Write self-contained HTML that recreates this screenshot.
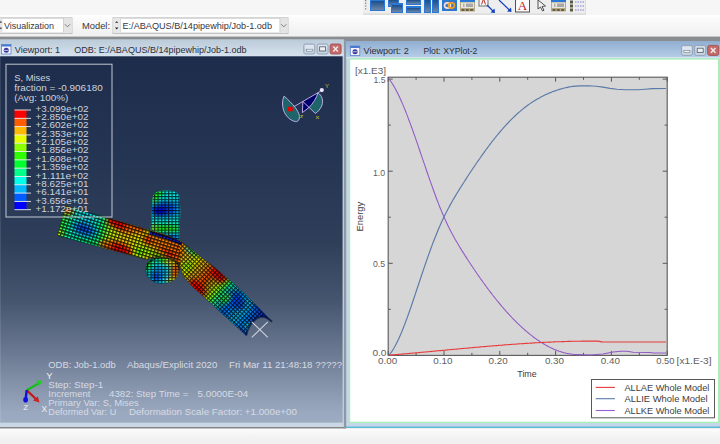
<!DOCTYPE html>
<html><head><meta charset="utf-8"><title>Abaqus Viewports</title>
<style>html,body{margin:0;padding:0;background:#f2f2f2;overflow:hidden} svg{display:block} text{font-family:"Liberation Sans", sans-serif}</style>
</head><body>
<svg width="720" height="444" viewBox="0 0 720 444">
<defs>
<linearGradient id="botbg" x1="0" y1="0" x2="0" y2="1"><stop offset="0" stop-color="#fcfcfc"/><stop offset="0.5" stop-color="#f4f4f4"/><stop offset="1" stop-color="#f0f0f0"/></linearGradient>
<linearGradient id="ctxbg" x1="0" y1="0" x2="0" y2="1"><stop offset="0" stop-color="#ffffff"/><stop offset="0.2" stop-color="#fafafa"/><stop offset="1" stop-color="#efefef"/></linearGradient>
<linearGradient id="vp1bg" x1="0" y1="0" x2="0" y2="1">
 <stop offset="0" stop-color="#1d2c4a"/>
 <stop offset="0.27" stop-color="#243553"/>
 <stop offset="0.51" stop-color="#2f3f5a"/>
 <stop offset="0.67" stop-color="#47566f"/>
 <stop offset="0.81" stop-color="#6b7a92"/>
 <stop offset="0.97" stop-color="#9aa8bf"/>
 <stop offset="1" stop-color="#9eacc2"/>
</linearGradient>
<linearGradient id="tb1" x1="0" y1="0" x2="0" y2="1"><stop offset="0" stop-color="#bccbd9"/><stop offset="1" stop-color="#d6e2ee"/></linearGradient>
<linearGradient id="tb2" x1="0" y1="0" x2="0" y2="1"><stop offset="0" stop-color="#90aed0"/><stop offset="1" stop-color="#b6cde8"/></linearGradient>
<linearGradient id="icoblue" x1="0" y1="0" x2="0" y2="1"><stop offset="0" stop-color="#1a4f8a"/><stop offset="1" stop-color="#6d86a8"/></linearGradient>
<filter id="blur3" x="-50%" y="-50%" width="200%" height="200%"><feGaussianBlur stdDeviation="3"/></filter>
<filter id="blur2" x="-50%" y="-50%" width="200%" height="200%"><feGaussianBlur stdDeviation="2"/></filter>
<filter id="blur5" x="-50%" y="-50%" width="200%" height="200%"><feGaussianBlur stdDeviation="5"/></filter>

<pattern id="mesh1" patternUnits="userSpaceOnUse" width="3.5" height="3.1" patternTransform="rotate(17)">
  <path d="M0 0.6 L3.5 0.6 M0.6 0 L0.6 3.1" stroke="#000" stroke-width="1.35" stroke-opacity="0.8"/>
</pattern>
<pattern id="mesh2" patternUnits="userSpaceOnUse" width="3.2" height="2.9" patternTransform="rotate(43)">
  <path d="M0 0.55 L3.2 0.55 M0.55 0 L0.55 2.9" stroke="#000" stroke-width="1.2" stroke-opacity="0.8"/>
</pattern>
<pattern id="mesh3" patternUnits="userSpaceOnUse" width="3.5" height="2.8">
  <path d="M0 0.6 L3.5 0.6 M0.6 0 L0.6 2.8" stroke="#000" stroke-width="1.15" stroke-opacity="0.8"/>
</pattern>
<filter id="soft" x="-5%" y="-5%" width="110%" height="110%"><feGaussianBlur stdDeviation="0.35"/></filter>
<clipPath id="cCyl"><path d="M150.2 246 L151.2 220 L152.6 200 C152.8 194 156 190.4 166 190.4 C175 190.4 179.6 193 179.9 198 L180.2 212 L179.6 246 Z"/></clipPath><clipPath id="cStub"><path d="M146 270 C146 260 153 255.5 162 255.5 C171 255.5 179.6 260 179.6 269.5 C179.6 278 171 283.6 162 283.6 C153 283.6 146 278 146 270 Z"/></clipPath><clipPath id="cPipeL"><path d="M65.3 205.6 L151.8 230.7 C164 234 172 236.5 180 241 C187 245.5 194 251 200 256.5 L214 267 C230 280 250 298 272 321.8 C267 316.5 261 315.5 256.5 318.5 C251.5 322 247.5 328 246.2 335.5 L192 286 L183.7 277 C182 272 181 268 179.5 265 C177 260 170 257.2 162 257.2 C155 257.2 150 258.5 146 259.3 L57.4 235.5 Z"/><rect x="0" y="0" width="0" height="0"/></clipPath><clipPath id="cPipe"><path d="M65.3 205.6 L151.8 230.7 C164 234 172 236.5 180 241 C187 245.5 194 251 200 256.5 L214 267 C230 280 250 298 272 321.8 C267 316.5 261 315.5 256.5 318.5 C251.5 322 247.5 328 246.2 335.5 L192 286 L183.7 277 C182 272 181 268 179.5 265 C177 260 170 257.2 162 257.2 C155 257.2 150 258.5 146 259.3 L57.4 235.5 Z"/></clipPath><linearGradient id="gL" gradientUnits="userSpaceOnUse" x1="58" y1="218" x2="182" y2="252">
 <stop offset="0" stop-color="#40ff00"/><stop offset="0.12" stop-color="#00ffc0"/><stop offset="0.22" stop-color="#00c8ff"/>
 <stop offset="0.34" stop-color="#00ff80"/><stop offset="0.42" stop-color="#c0ff00"/><stop offset="0.55" stop-color="#ffd000"/>
 <stop offset="0.68" stop-color="#d0ff00"/><stop offset="0.82" stop-color="#ff9000"/><stop offset="1" stop-color="#ff6000"/>
</linearGradient>
<linearGradient id="gR" gradientUnits="userSpaceOnUse" x1="182" y1="250" x2="268" y2="328">
 <stop offset="0" stop-color="#ff9000"/><stop offset="0.14" stop-color="#e8ff00"/><stop offset="0.32" stop-color="#ff5000"/>
 <stop offset="0.44" stop-color="#b0ff00"/><stop offset="0.52" stop-color="#00ffb0"/><stop offset="0.62" stop-color="#0070ff"/>
 <stop offset="0.74" stop-color="#00c8ff"/><stop offset="0.86" stop-color="#0050ff"/><stop offset="1" stop-color="#00a0ff"/>
</linearGradient></defs>
<rect x="0" y="0" width="720" height="444" fill="#f2f2f2"/>
<rect x="0" y="0" width="720" height="15" fill="#f6f6f6"/>
<rect x="0" y="15" width="720" height="22" fill="url(#ctxbg)"/>
<rect x="363" y="0" width="223" height="14.5" fill="#eeeeee"/>
<rect x="363" y="13.5" width="223" height="1.2" fill="#d6d6d6"/>
<rect x="585" y="0" width="1" height="14.5" fill="#dcdcdc"/>
<rect x="365" y="0" width="1.3" height="1.3" fill="#8a8a8a"/>
<rect x="365" y="2.6" width="1.3" height="1.3" fill="#8a8a8a"/>
<rect x="365" y="5.4" width="1.3" height="1.3" fill="#8a8a8a"/>
<rect x="365" y="8.2" width="1.3" height="1.3" fill="#8a8a8a"/>
<rect x="370" y="-1" width="15" height="12" fill="#2a78d6"/>
<rect x="371" y="1" width="13" height="9" fill="url(#icoblue)"/>
<rect x="388" y="-1" width="11" height="8" fill="#2a78d6"/><rect x="389" y="0" width="9" height="6" fill="url(#icoblue)"/>
<rect x="391" y="3" width="12" height="10" fill="#2a78d6"/><rect x="392" y="5" width="10" height="7" fill="url(#icoblue)"/>
<rect x="406" y="-1" width="15" height="6" fill="#2a78d6"/><rect x="407" y="0" width="13" height="4" fill="url(#icoblue)"/>
<rect x="406" y="6" width="15" height="7" fill="#2a78d6"/><rect x="407" y="8" width="13" height="4" fill="url(#icoblue)"/>
<rect x="424" y="-1" width="7" height="14" fill="#2a78d6"/><rect x="425" y="0" width="5" height="12" fill="url(#icoblue)"/>
<rect x="432" y="-1" width="7" height="14" fill="#2a78d6"/><rect x="433" y="0" width="5" height="12" fill="url(#icoblue)"/>
<rect x="442" y="-1" width="15" height="12" fill="#2a78d6"/><rect x="443" y="1" width="13" height="9" fill="#3f74b8"/>
<ellipse cx="447.5" cy="5.5" rx="3" ry="2.6" fill="none" stroke="#f0e0e0" stroke-width="1.6"/>
<ellipse cx="451.5" cy="5.5" rx="3" ry="2.6" fill="none" stroke="#f0a020" stroke-width="1.6"/>
<rect x="460" y="-1" width="15" height="12.5" fill="#b4aa88"/>
<rect x="460" y="-1" width="15" height="3" fill="#2a78d6"/>
<rect x="461" y="2.5" width="13" height="5.5" fill="#e8e6dc"/>
<rect x="463" y="3.5" width="1.5" height="3.5" fill="#b0b0b0"/><rect x="466" y="3.5" width="7" height="3.5" fill="#a8a8a8"/>
<rect x="461.5" y="9" width="3" height="2" fill="#6a6040"/>
<rect x="465.8" y="9" width="3" height="2" fill="#6a6040"/>
<rect x="470.1" y="9" width="3" height="2" fill="#6a6040"/>
<rect x="479" y="-2" width="9" height="8" fill="#f8f8f8" stroke="#707070" stroke-width="1"/>
<path d="M481.5 4.5 L483.5 -1 L485.5 4.5" fill="none" stroke="#c03030" stroke-width="1"/>
<path d="M487 5 L493.5 11.5" stroke="#1040c0" stroke-width="1.2"/><path d="M490.5 12.5 L495 13 L494.5 8.5 Z" fill="#1040c0"/>
<path d="M499 0 L510 10.5" stroke="#1040c0" stroke-width="1.2"/><path d="M507 11.5 L511.5 12 L511 7.5 Z" fill="#1040c0"/>
<rect x="515.5" y="-1" width="14" height="13" fill="#fafafa" stroke="#505050" stroke-width="1"/>
<text x="522.5" y="10.3" font-size="13" fill="#c01c1c" text-anchor="middle" style="font-family:'Liberation Serif',serif">A</text>
<path d="M538 0 L538 9 L540.5 7 L542.5 11 L544 10.3 L542 6.5 L545.5 6 Z" fill="#f4f4f4" stroke="#404040" stroke-width="0.9"/>
<rect x="551" y="-1" width="15" height="12.5" fill="#b4aa88"/>
<rect x="551" y="-1" width="15" height="3" fill="#2a78d6"/>
<rect x="552" y="2.5" width="13" height="5.5" fill="#e8e6dc"/>
<rect x="554" y="3.5" width="1.5" height="3.5" fill="#b0b0b0"/><rect x="557" y="3.5" width="7" height="3.5" fill="#a8a8a8"/>
<rect x="552.5" y="9" width="3" height="2" fill="#6a6040"/>
<rect x="556.8" y="9" width="3" height="2" fill="#6a6040"/>
<rect x="561.1" y="9" width="3" height="2" fill="#6a6040"/>
<rect x="570" y="0.5" width="3" height="3" fill="#5a5a40"/>
<path d="M575 2.0 L584 2.0" stroke="#8080d0" stroke-width="1" stroke-dasharray="1.5 1"/>
<rect x="570" y="4.5" width="3" height="3" fill="#5a5a40"/>
<path d="M575 6.0 L584 6.0" stroke="#8080d0" stroke-width="1" stroke-dasharray="1.5 1"/>
<rect x="570" y="8.5" width="3" height="3" fill="#5a5a40"/>
<path d="M575 10.0 L584 10.0" stroke="#8080d0" stroke-width="1" stroke-dasharray="1.5 1"/>
<rect x="-1" y="17.3" width="73.5" height="16.7" fill="#c4c4c4"/>
<rect x="0" y="18.6" width="71.5" height="14.0" fill="#ffffff"/>
<rect x="0" y="18.6" width="2.6" height="14.0" fill="#e6e6e6"/>
<rect x="0" y="21.3" width="1.6" height="1.6" fill="#555"/><rect x="0" y="27.5" width="1.6" height="1.6" fill="#555"/>
<rect x="63.5" y="18.2" width="8" height="14.2" fill="#e4e4e4"/><rect x="63" y="18.2" width="0.8" height="14.2" fill="#c8c8c8"/>
<path d="M64.9 24.2 L67.5 26.9 L70.1 24.2" fill="none" stroke="#6a6a6a" stroke-width="0.8"/>
<text x="4" y="28.8" font-size="9.5" fill="#34383f" text-anchor="start" textLength="50" lengthAdjust="spacingAndGlyphs" >Visualization</text>
<text x="82" y="28.8" font-size="9.5" fill="#34383f" text-anchor="start" textLength="28" lengthAdjust="spacingAndGlyphs" >Model:</text>
<rect x="112.5" y="17.3" width="176" height="16.7" fill="#c4c4c4"/>
<rect x="113.5" y="18.6" width="174" height="14.0" fill="#ffffff"/>
<rect x="113.5" y="18.2" width="6.5" height="14.2" fill="#e8e8e8"/><rect x="120" y="18.2" width="0.8" height="14.2" fill="#d0d0d0"/>
<path d="M115 23 L116.7 21 L118.4 23 Z" fill="#555"/><path d="M115 27.5 L116.7 29.5 L118.4 27.5 Z" fill="#222"/>
<rect x="280" y="18.2" width="7.5" height="14.2" fill="#e4e4e4"/><rect x="279.5" y="18.2" width="0.8" height="14.2" fill="#c8c8c8"/>
<path d="M281.2 24.2 L283.8 26.9 L286.4 24.2" fill="none" stroke="#6a6a6a" stroke-width="0.8"/>
<text x="122.5" y="28.8" font-size="9.5" fill="#34383f" text-anchor="start" textLength="149.5" lengthAdjust="spacingAndGlyphs" >E:/ABAQUS/B/14pipewhip/Job-1.odb</text>
<rect x="0" y="36.6" width="720" height="391.8" fill="#8a8c90"/>
<rect x="0" y="39.6" width="344" height="387.4" fill="#c4d2e0" rx="1"/>
<rect x="0" y="39.6" width="344" height="16.8" fill="url(#tb1)"/>
<rect x="0" y="56.3" width="342.6" height="366.5" fill="url(#vp1bg)"/>
<rect x="0" y="56.3" width="1" height="366.5" fill="#ffffff" fill-opacity="0.1"/>
<rect x="1.5" y="44.5" width="9.5" height="9.5" fill="#f4f6fc" stroke="#5a82c8" stroke-width="0.8"/>
<rect x="1.5" y="44.5" width="9.5" height="2" fill="#4a7ad0"/>
<ellipse cx="6.25" cy="50.3" rx="2.6" ry="2.5" fill="#3a3898"/>
<rect x="3.8" y="49.9" width="4.9" height="0.8" fill="#d8d8f8"/>
<text x="14.8" y="52.9" font-size="9" fill="#2c3038" text-anchor="start" textLength="45.3" lengthAdjust="spacingAndGlyphs" >Viewport: 1</text>
<text x="74.3" y="52.9" font-size="9" fill="#2c3038" text-anchor="start" textLength="172.3" lengthAdjust="spacingAndGlyphs" >ODB: E:/ABAQUS/B/14pipewhip/Job-1.odb</text>
<rect x="303.8" y="44" width="11" height="10" rx="1.8" fill="#c8d4e2" stroke="#8e9eb4" stroke-width="0.9"/>
<rect x="304.8" y="45" width="9" height="4" rx="1" fill="#dde6f0"/>
<rect x="317.1" y="44" width="11" height="10" rx="1.8" fill="#c8d4e2" stroke="#8e9eb4" stroke-width="0.9"/>
<rect x="318.1" y="45" width="9" height="4" rx="1" fill="#dde6f0"/>
<rect x="330.1" y="44" width="11" height="10" rx="1.8" fill="#c46a6a" stroke="#a05050" stroke-width="0.9"/>
<rect x="306.3" y="49.2" width="6" height="2" fill="#f4f4f4" stroke="#707c8c" stroke-width="0.6"/>
<rect x="319.6" y="46.8" width="6" height="4.2" fill="#eef0f4" stroke="#5a6878" stroke-width="0.9"/>
<path d="M333.3 46.6 L337.90000000000003 51.4 M337.90000000000003 46.6 L333.3 51.4" stroke="#f2e8e8" stroke-width="1.5"/>
<g filter="url(#soft)">
<g clip-path="url(#cCyl)"><rect x="140" y="185" width="50" height="65" fill="#00f0f0"/><g filter="url(#blur2)"><ellipse cx="154" cy="200" rx="4" ry="10" transform="rotate(0 154 200)" fill="#20ff00"/><ellipse cx="158" cy="193" rx="5" ry="3" transform="rotate(0 158 193)" fill="#20ff00"/><ellipse cx="165" cy="209" rx="16" ry="7" transform="rotate(0 165 209)" fill="#0050ff"/><ellipse cx="160" cy="211" rx="8" ry="5" transform="rotate(0 160 211)" fill="#0000e0"/><ellipse cx="178" cy="207" rx="3" ry="9" transform="rotate(0 178 207)" fill="#00a8ff"/><ellipse cx="165" cy="229" rx="16" ry="4" transform="rotate(0 165 229)" fill="#20ff00"/><ellipse cx="154" cy="228" rx="3" ry="4" transform="rotate(0 154 228)" fill="#a0ff00"/><ellipse cx="178" cy="228" rx="2" ry="5" transform="rotate(0 178 228)" fill="#00ff60"/><ellipse cx="166" cy="237" rx="15" ry="3" transform="rotate(0 166 237)" fill="#0050ff"/><ellipse cx="158" cy="237" rx="6" ry="2" transform="rotate(0 158 237)" fill="#0000e0"/></g><rect x="140" y="185" width="50" height="65" fill="url(#mesh3)"/></g>
<g clip-path="url(#cStub)"><rect x="140" y="250" width="45" height="40" fill="#00f0f0"/><g filter="url(#blur2)"><ellipse cx="148" cy="264" rx="4" ry="7" transform="rotate(0 148 264)" fill="#20ff00"/><ellipse cx="158" cy="274" rx="8" ry="8" transform="rotate(0 158 274)" fill="#00a8ff"/><ellipse cx="156" cy="277" rx="5" ry="5" transform="rotate(0 156 277)" fill="#0050ff"/><ellipse cx="175" cy="272" rx="5" ry="9" transform="rotate(0 175 272)" fill="#ff8000"/><ellipse cx="170" cy="261" rx="8" ry="4" transform="rotate(0 170 261)" fill="#ffe000"/><ellipse cx="162" cy="260" rx="5" ry="3" transform="rotate(0 162 260)" fill="#20ff00"/><ellipse cx="171" cy="281" rx="5" ry="3" transform="rotate(0 171 281)" fill="#ffe000"/><ellipse cx="178" cy="268" rx="2" ry="6" transform="rotate(0 178 268)" fill="#ff0000"/></g><rect x="140" y="250" width="45" height="40" fill="url(#mesh3)"/><path d="M146 270 C146 262 153 257.5 162 257.5 C171 257.5 179.6 262 179.6 269.5" fill="none" stroke="#000" stroke-opacity="0.55" stroke-width="2"/></g>
<g clip-path="url(#cPipe)"><rect x="50" y="195" width="132" height="145" fill="url(#gL)"/><rect x="180" y="195" width="100" height="145" fill="url(#gR)"/><g filter="url(#blur2)"><ellipse cx="68" cy="210" rx="6" ry="5" transform="rotate(17 68 210)" fill="#ff8000"/><ellipse cx="59" cy="233" rx="4" ry="3" transform="rotate(17 59 233)" fill="#ffe000"/><ellipse cx="85" cy="229" rx="13" ry="6" transform="rotate(17 85 229)" fill="#00a8ff"/><ellipse cx="84" cy="229" rx="9" ry="4" transform="rotate(17 84 229)" fill="#0050ff"/><ellipse cx="83" cy="229" rx="4" ry="2.2" transform="rotate(17 83 229)" fill="#0000e0"/><ellipse cx="88" cy="217" rx="14" ry="3" transform="rotate(17 88 217)" fill="#00f0f0"/><ellipse cx="86" cy="242" rx="14" ry="3" transform="rotate(17 86 242)" fill="#00ff60"/><ellipse cx="126" cy="225" rx="20" ry="6.5" transform="rotate(17 126 225)" fill="#ff0000"/><ellipse cx="116" cy="248" rx="17" ry="6" transform="rotate(17 116 248)" fill="#ff0000"/><ellipse cx="133" cy="229" rx="8" ry="3" transform="rotate(17 133 229)" fill="#ff8000"/><ellipse cx="106" cy="244" rx="6" ry="3" transform="rotate(17 106 244)" fill="#ff8000"/><ellipse cx="141" cy="252" rx="6" ry="3" transform="rotate(17 141 252)" fill="#20ff00"/><ellipse cx="140" cy="236" rx="6" ry="3" transform="rotate(17 140 236)" fill="#ffe000"/><ellipse cx="150" cy="240" rx="8" ry="5" transform="rotate(17 150 240)" fill="#ff3000"/><ellipse cx="163" cy="243" rx="13" ry="5" transform="rotate(17 163 243)" fill="#ff8000"/><ellipse cx="167" cy="252" rx="8" ry="3" transform="rotate(20 167 252)" fill="#ff0000"/><ellipse cx="148" cy="252" rx="7" ry="4" transform="rotate(17 148 252)" fill="#a0ff00"/><ellipse cx="158" cy="255" rx="6" ry="2" transform="rotate(17 158 255)" fill="#20ff00"/><ellipse cx="192" cy="251" rx="7" ry="3" transform="rotate(38 192 251)" fill="#20ff00"/><ellipse cx="188" cy="249" rx="4" ry="2" transform="rotate(38 188 249)" fill="#00f0f0"/><ellipse cx="187" cy="266" rx="5" ry="5" transform="rotate(43 187 266)" fill="#a0ff00"/><ellipse cx="194" cy="284" rx="5" ry="4" transform="rotate(43 194 284)" fill="#ff0000"/><ellipse cx="219" cy="275" rx="9" ry="6" transform="rotate(43 219 275)" fill="#ff0000"/><ellipse cx="198" cy="289" rx="9" ry="5" transform="rotate(43 198 289)" fill="#ff0000"/><ellipse cx="235" cy="300" rx="12" ry="6" transform="rotate(43 235 300)" fill="#0050ff"/><ellipse cx="246" cy="290" rx="10" ry="4" transform="rotate(43 246 290)" fill="#00f0f0"/><ellipse cx="226" cy="298" rx="4" ry="6" transform="rotate(43 226 298)" fill="#20ff00"/><ellipse cx="262" cy="311" rx="10" ry="5" transform="rotate(43 262 311)" fill="#0050ff"/><ellipse cx="265" cy="317" rx="7" ry="2.5" transform="rotate(43 265 317)" fill="#0000e0"/><ellipse cx="250" cy="328" rx="7" ry="4" transform="rotate(43 250 328)" fill="#00f0f0"/></g><path d="M150 232.5 C163 236 172 238.5 182 244" stroke="#0818b0" stroke-width="3" fill="none" filter="url(#soft)"/><rect x="50" y="195" width="130" height="145" fill="url(#mesh1)"/><rect x="180" y="195" width="100" height="145" fill="url(#mesh2)"/></g>
<path d="M272 321.8 C267 316.5 261 315.5 256.5 318.5 C251.5 322 247.5 328 246.2 335.5" fill="none" stroke="#000a40" stroke-width="2.2" stroke-opacity="0.5"/>
<path d="M65.3 205.6 L151.8 230.7 C164 234 172 236.5 180 241 C187 245.5 194 251 200 256.5 L214 267 C230 280 250 298 272 321.8 C267 316.5 261 315.5 256.5 318.5 C251.5 322 247.5 328 246.2 335.5 L192 286 L183.7 277 C182 272 181 268 179.5 265 C177 260 170 257.2 162 257.2 C155 257.2 150 258.5 146 259.3 L57.4 235.5 Z" fill="none" stroke="#0a1424" stroke-width="0.7" stroke-opacity="0.7"/>
<path d="M146 270 C146 260 153 255.5 162 255.5 C171 255.5 179.6 260 179.6 269.5 C179.6 278 171 283.6 162 283.6 C153 283.6 146 278 146 270" fill="none" stroke="#0a1424" stroke-width="0.6" stroke-opacity="0.6"/>
</g>
<path d="M251.8 321.8 L267.8 337.4 M267.8 321.8 L251.8 337.4" stroke="#cdd2da" stroke-width="1.05"/>
<rect x="6" y="64.2" width="106" height="152.8" fill="none" stroke="#c2c8d2" stroke-width="1"/>
<text x="14.2" y="81" font-size="9" fill="#cdd3de" text-anchor="start" textLength="36" lengthAdjust="spacingAndGlyphs" >S, Mises</text>
<text x="14.2" y="91.4" font-size="9" fill="#cdd3de" text-anchor="start" textLength="88.5" lengthAdjust="spacingAndGlyphs" >fraction = -0.906180</text>
<text x="14.2" y="101.3" font-size="9" fill="#cdd3de" text-anchor="start" textLength="54" lengthAdjust="spacingAndGlyphs" >(Avg: 100%)</text>
<rect x="14.5" y="110.00" width="12" height="8.36" fill="#ff0000"/>
<rect x="14.5" y="118.31" width="12" height="8.36" fill="#ff5d00"/>
<rect x="14.5" y="126.62" width="12" height="8.36" fill="#ffb900"/>
<rect x="14.5" y="134.93" width="12" height="8.36" fill="#e8ff00"/>
<rect x="14.5" y="143.23" width="12" height="8.36" fill="#8bff00"/>
<rect x="14.5" y="151.54" width="12" height="8.36" fill="#2eff00"/>
<rect x="14.5" y="159.85" width="12" height="8.36" fill="#00ff2e"/>
<rect x="14.5" y="168.16" width="12" height="8.36" fill="#00ff8b"/>
<rect x="14.5" y="176.47" width="12" height="8.36" fill="#00ffe8"/>
<rect x="14.5" y="184.77" width="12" height="8.36" fill="#00b9ff"/>
<rect x="14.5" y="193.08" width="12" height="8.36" fill="#005dff"/>
<rect x="14.5" y="201.39" width="12" height="8.36" fill="#0000ff"/>
<rect x="14.5" y="109.55" width="16.5" height="0.9" fill="#f0f0f0"/>
<text x="35.5" y="111.60" font-size="9.4" fill="#cdd3de" text-anchor="start" textLength="53" lengthAdjust="spacingAndGlyphs" >+3.099e+02</text>
<rect x="14.5" y="117.86" width="16.5" height="0.9" fill="#f0f0f0"/>
<text x="35.5" y="119.97" font-size="9.4" fill="#cdd3de" text-anchor="start" textLength="53" lengthAdjust="spacingAndGlyphs" >+2.850e+02</text>
<rect x="14.5" y="126.17" width="16.5" height="0.9" fill="#f0f0f0"/>
<text x="35.5" y="128.34" font-size="9.4" fill="#cdd3de" text-anchor="start" textLength="53" lengthAdjust="spacingAndGlyphs" >+2.602e+02</text>
<rect x="14.5" y="134.48" width="16.5" height="0.9" fill="#f0f0f0"/>
<text x="35.5" y="136.71" font-size="9.4" fill="#cdd3de" text-anchor="start" textLength="53" lengthAdjust="spacingAndGlyphs" >+2.353e+02</text>
<rect x="14.5" y="142.78" width="16.5" height="0.9" fill="#f0f0f0"/>
<text x="35.5" y="145.08" font-size="9.4" fill="#cdd3de" text-anchor="start" textLength="53" lengthAdjust="spacingAndGlyphs" >+2.105e+02</text>
<rect x="14.5" y="151.09" width="16.5" height="0.9" fill="#f0f0f0"/>
<text x="35.5" y="153.45" font-size="9.4" fill="#cdd3de" text-anchor="start" textLength="53" lengthAdjust="spacingAndGlyphs" >+1.856e+02</text>
<rect x="14.5" y="159.40" width="16.5" height="0.9" fill="#f0f0f0"/>
<text x="35.5" y="161.82" font-size="9.4" fill="#cdd3de" text-anchor="start" textLength="53" lengthAdjust="spacingAndGlyphs" >+1.608e+02</text>
<rect x="14.5" y="167.71" width="16.5" height="0.9" fill="#f0f0f0"/>
<text x="35.5" y="170.19" font-size="9.4" fill="#cdd3de" text-anchor="start" textLength="53" lengthAdjust="spacingAndGlyphs" >+1.359e+02</text>
<rect x="14.5" y="176.02" width="16.5" height="0.9" fill="#f0f0f0"/>
<text x="35.5" y="178.56" font-size="9.4" fill="#cdd3de" text-anchor="start" textLength="53" lengthAdjust="spacingAndGlyphs" >+1.111e+02</text>
<rect x="14.5" y="184.32" width="16.5" height="0.9" fill="#f0f0f0"/>
<text x="35.5" y="186.93" font-size="9.4" fill="#cdd3de" text-anchor="start" textLength="53" lengthAdjust="spacingAndGlyphs" >+8.625e+01</text>
<rect x="14.5" y="192.63" width="16.5" height="0.9" fill="#f0f0f0"/>
<text x="35.5" y="195.30" font-size="9.4" fill="#cdd3de" text-anchor="start" textLength="53" lengthAdjust="spacingAndGlyphs" >+6.141e+01</text>
<rect x="14.5" y="200.94" width="16.5" height="0.9" fill="#f0f0f0"/>
<text x="35.5" y="203.67" font-size="9.4" fill="#cdd3de" text-anchor="start" textLength="53" lengthAdjust="spacingAndGlyphs" >+3.656e+01</text>
<rect x="14.5" y="209.25" width="16.5" height="0.9" fill="#f0f0f0"/>
<text x="35.5" y="212.04" font-size="9.4" fill="#cdd3de" text-anchor="start" textLength="53" lengthAdjust="spacingAndGlyphs" >+1.172e+01</text>
<text x="48.3" y="368.2" font-size="9" fill="#d6dbe4" text-anchor="start" textLength="67.4" lengthAdjust="spacingAndGlyphs" >ODB: Job-1.odb</text>
<text x="127" y="368.2" font-size="9" fill="#d6dbe4" text-anchor="start" textLength="90.3" lengthAdjust="spacingAndGlyphs" >Abaqus/Explicit 2020</text>
<text x="229" y="368.2" font-size="9" fill="#d6dbe4" text-anchor="start" textLength="113" lengthAdjust="spacingAndGlyphs" >Fri Mar 11 21:48:18 ?????</text>
<text x="48.3" y="388.3" font-size="9" fill="#d6dbe4" text-anchor="start" textLength="54.9" lengthAdjust="spacingAndGlyphs" >Step: Step-1</text>
<text x="48.3" y="397.2" font-size="9" fill="#d6dbe4" text-anchor="start" textLength="42" lengthAdjust="spacingAndGlyphs" >Increment</text>
<text x="109" y="397.2" font-size="9" fill="#d6dbe4" text-anchor="start" textLength="79.4" lengthAdjust="spacingAndGlyphs" >4382: Step Time =</text>
<text x="197.5" y="397.2" font-size="9" fill="#d6dbe4" text-anchor="start" textLength="50.8" lengthAdjust="spacingAndGlyphs" >5.0000E-04</text>
<text x="48.3" y="406.3" font-size="9" fill="#d6dbe4" text-anchor="start" textLength="90.5" lengthAdjust="spacingAndGlyphs" >Primary Var: S, Mises</text>
<text x="48.3" y="415.4" font-size="9" fill="#d6dbe4" text-anchor="start" textLength="68" lengthAdjust="spacingAndGlyphs" >Deformed Var: U</text>
<text x="128.9" y="415.4" font-size="9" fill="#d6dbe4" text-anchor="start" textLength="168" lengthAdjust="spacingAndGlyphs" >Deformation Scale Factor: +1.000e+00</text>
<path d="M26.7 390.2 L40 382.6" stroke="#10c010" stroke-width="2.2"/><path d="M36.5 379.8 L42.5 381.2 L39 386 Z" fill="#20d020"/>
<path d="M26.7 390.2 L36.5 399.5" stroke="#c01818" stroke-width="2.2"/><path d="M33 400.5 L39.5 402.5 L37.8 396.5 Z" fill="#d02020"/>
<path d="M26.7 390.2 L25.8 398" stroke="#1010d0" stroke-width="2.4"/><ellipse cx="25.6" cy="399.8" rx="2.4" ry="2.8" fill="#1010e0"/>
<text x="46.2" y="379.3" font-size="9" fill="#f0f0f0" text-anchor="start" textLength="6.3" lengthAdjust="spacingAndGlyphs" >Y</text>
<text x="23.3" y="410" font-size="8" fill="#f0f0f0" text-anchor="start" textLength="5" lengthAdjust="spacingAndGlyphs" >Z</text>
<text x="41.4" y="412" font-size="9" fill="#f0f0f0" text-anchor="start" textLength="5.6" lengthAdjust="spacingAndGlyphs" >X</text>
<path d="M284.1 96.1 C282 100 282.2 106 283.5 110 C285.5 116 290 120.5 295.5 121.6 C298.5 122 299.8 119 299.3 115.4 C298 110 293 104 284.1 96.1 Z" fill="#1d6568" stroke="#c4b0f0" stroke-width="0.95"/>
<rect x="287.7" y="106.8" width="5" height="4.5" fill="#ee0000"/>
<path d="M317.9 92.9 C322 95 323.5 101 322 105 C320.5 109 318 112 315.3 113.4 L309 107.5 C313 103.5 316.5 98 317.9 92.9 Z" fill="#1d6568"/>
<path d="M302.9 101.5 L317.9 92.9 C316.5 98 313 103.5 309 107.5 Z" fill="#00006a"/>
<path d="M302.9 101.5 L309 107.5 L302.4 112.6 Z" fill="#00006a"/>
<path d="M293.7 106.8 L320.5 91.2 M302.9 101.5 L302.4 112.6 M302.9 101.5 L315.3 113.4 M302.4 112.6 L309 107.5 M317.9 92.9 C316.5 98 313 103.5 309 107.5 M317.9 92.9 C322 95 323.5 101 322 105 C320.5 109 318 112 315.3 113.4" stroke="#c4b0f0" stroke-width="0.95" fill="none"/>
<circle cx="321.8" cy="90.1" r="2.1" fill="#ece4fa"/>
<text x="325" y="88.2" font-size="6" fill="#c8c030" text-anchor="start" textLength="4" lengthAdjust="spacingAndGlyphs" >Y</text>
<text x="299.8" y="118" font-size="6" fill="#c8c030" text-anchor="start" textLength="3.6" lengthAdjust="spacingAndGlyphs" >z</text>
<text x="315.6" y="118.5" font-size="6" fill="#c8c030" text-anchor="start" textLength="3.8" lengthAdjust="spacingAndGlyphs" >x</text>
<rect x="346.1" y="41" width="373.9" height="386.5" fill="#c6d6ea" rx="2"/>
<rect x="346.1" y="41" width="373.9" height="16.5" fill="url(#tb2)"/>
<rect x="346.1" y="57" width="373.9" height="1.6" fill="#d6e2f0"/>
<rect x="346.1" y="426.5" width="373.9" height="1.5" fill="#5cbcd6"/>
<rect x="349.5" y="59" width="369.2" height="363.4" fill="#ffffff" stroke="#a8f0b8" stroke-width="1.4"/>
<rect x="350.3" y="46" width="9.5" height="9.5" fill="#f4f6fc" stroke="#5a82c8" stroke-width="0.8"/>
<rect x="350.3" y="46" width="9.5" height="2" fill="#4a7ad0"/>
<ellipse cx="355.05" cy="51.8" rx="2.6" ry="2.5" fill="#3a3898"/>
<rect x="352.6" y="51.4" width="4.9" height="0.8" fill="#d8d8f8"/>
<text x="363.5" y="53.9" font-size="9" fill="#2c3038" text-anchor="start" textLength="45.2" lengthAdjust="spacingAndGlyphs" >Viewport: 2</text>
<text x="423.4" y="53.9" font-size="9" fill="#2c3038" text-anchor="start" textLength="54" lengthAdjust="spacingAndGlyphs" >Plot: XYPlot-2</text>
<rect x="681.4" y="45.4" width="11" height="10" rx="1.8" fill="#c8d4e2" stroke="#8e9eb4" stroke-width="0.9"/>
<rect x="682.4" y="46.4" width="9" height="4" rx="1" fill="#dde6f0"/>
<rect x="694.6999999999999" y="45.4" width="11" height="10" rx="1.8" fill="#c8d4e2" stroke="#8e9eb4" stroke-width="0.9"/>
<rect x="695.6999999999999" y="46.4" width="9" height="4" rx="1" fill="#dde6f0"/>
<rect x="707.6999999999999" y="45.4" width="11" height="10" rx="1.8" fill="#c46a6a" stroke="#a05050" stroke-width="0.9"/>
<rect x="683.9" y="50.6" width="6" height="2" fill="#f4f4f4" stroke="#707c8c" stroke-width="0.6"/>
<rect x="697.1999999999999" y="48.199999999999996" width="6" height="4.2" fill="#eef0f4" stroke="#5a6878" stroke-width="0.9"/>
<path d="M710.9 48.0 L715.4999999999999 52.8 M715.4999999999999 48.0 L710.9 52.8" stroke="#f2e8e8" stroke-width="1.5"/>
<rect x="388.2" y="77.2" width="279.00000000000006" height="278.2" fill="#d6d6d6" stroke="#5e5e5e" stroke-width="1.15"/>
<path d="M388.2 355.4 L388.2 350.9" stroke="#585858" stroke-width="1"/>
<path d="M388.2 77.2 L388.2 81.7" stroke="#585858" stroke-width="1"/>
<path d="M416.1 355.4 L416.1 352.79999999999995" stroke="#585858" stroke-width="1"/>
<path d="M416.1 77.2 L416.1 79.8" stroke="#585858" stroke-width="1"/>
<path d="M444.0 355.4 L444.0 350.9" stroke="#585858" stroke-width="1"/>
<path d="M444.0 77.2 L444.0 81.7" stroke="#585858" stroke-width="1"/>
<path d="M471.9 355.4 L471.9 352.79999999999995" stroke="#585858" stroke-width="1"/>
<path d="M471.9 77.2 L471.9 79.8" stroke="#585858" stroke-width="1"/>
<path d="M499.8 355.4 L499.8 350.9" stroke="#585858" stroke-width="1"/>
<path d="M499.8 77.2 L499.8 81.7" stroke="#585858" stroke-width="1"/>
<path d="M527.7 355.4 L527.7 352.79999999999995" stroke="#585858" stroke-width="1"/>
<path d="M527.7 77.2 L527.7 79.8" stroke="#585858" stroke-width="1"/>
<path d="M555.6 355.4 L555.6 350.9" stroke="#585858" stroke-width="1"/>
<path d="M555.6 77.2 L555.6 81.7" stroke="#585858" stroke-width="1"/>
<path d="M583.5 355.4 L583.5 352.79999999999995" stroke="#585858" stroke-width="1"/>
<path d="M583.5 77.2 L583.5 79.8" stroke="#585858" stroke-width="1"/>
<path d="M611.4 355.4 L611.4 350.9" stroke="#585858" stroke-width="1"/>
<path d="M611.4 77.2 L611.4 81.7" stroke="#585858" stroke-width="1"/>
<path d="M639.3 355.4 L639.3 352.79999999999995" stroke="#585858" stroke-width="1"/>
<path d="M639.3 77.2 L639.3 79.8" stroke="#585858" stroke-width="1"/>
<path d="M667.2 355.4 L667.2 350.9" stroke="#585858" stroke-width="1"/>
<path d="M667.2 77.2 L667.2 81.7" stroke="#585858" stroke-width="1"/>
<path d="M388.2 309.3 L390.8 309.3" stroke="#585858" stroke-width="1"/>
<path d="M667.2 309.3 L664.6 309.3" stroke="#585858" stroke-width="1"/>
<path d="M388.2 263.3 L392.7 263.3" stroke="#585858" stroke-width="1"/>
<path d="M667.2 263.3 L662.7 263.3" stroke="#585858" stroke-width="1"/>
<path d="M388.2 217.2 L390.8 217.2" stroke="#585858" stroke-width="1"/>
<path d="M667.2 217.2 L664.6 217.2" stroke="#585858" stroke-width="1"/>
<path d="M388.2 171.2 L392.7 171.2" stroke="#585858" stroke-width="1"/>
<path d="M667.2 171.2 L662.7 171.2" stroke="#585858" stroke-width="1"/>
<path d="M388.2 125.1 L390.8 125.1" stroke="#585858" stroke-width="1"/>
<path d="M667.2 125.1 L664.6 125.1" stroke="#585858" stroke-width="1"/>
<path d="M388.2 79.1 L392.7 79.1" stroke="#585858" stroke-width="1"/>
<path d="M667.2 79.1 L662.7 79.1" stroke="#585858" stroke-width="1"/>
<path d="M388.4 355.8 L389.4 354.7 L390.4 353.5 L391.4 352.1 L392.4 350.6 L393.4 349.0 L394.4 347.3 L395.4 345.5 L396.4 343.6 L397.4 341.6 L398.4 339.5 L399.4 337.3 L400.4 335.0 L401.4 332.6 L402.4 330.2 L403.4 327.7 L404.4 325.1 L405.4 322.5 L406.4 319.8 L407.4 317.1 L408.4 314.3 L409.4 311.5 L410.4 308.6 L411.4 305.7 L412.4 302.8 L413.4 299.8 L414.4 296.8 L415.4 293.9 L416.4 290.8 L417.4 287.8 L418.4 284.8 L419.4 281.8 L420.4 278.8 L421.4 275.8 L422.4 272.8 L423.4 269.9 L424.4 266.9 L425.4 264.0 L426.4 261.1 L427.4 258.2 L428.4 255.4 L429.4 252.6 L430.4 249.8 L431.4 247.1 L432.4 244.4 L433.4 241.8 L434.4 239.2 L435.4 236.7 L436.4 234.2 L437.4 231.7 L438.4 229.3 L439.4 227.0 L440.4 224.7 L441.4 222.5 L442.4 220.3 L443.4 218.2 L444.4 216.1 L445.4 214.1 L446.4 212.1 L447.4 210.2 L448.4 208.3 L449.4 206.4 L450.4 204.6 L451.4 202.8 L452.4 201.0 L453.4 199.3 L454.4 197.6 L455.4 195.9 L456.4 194.2 L457.4 192.6 L458.4 191.0 L459.4 189.4 L460.4 187.8 L461.4 186.2 L462.4 184.6 L463.4 183.0 L464.4 181.5 L465.4 179.9 L466.4 178.4 L467.4 176.8 L468.4 175.3 L469.4 173.8 L470.4 172.2 L471.4 170.7 L472.4 169.2 L473.4 167.7 L474.4 166.3 L475.4 164.8 L476.4 163.3 L477.4 161.8 L478.4 160.4 L479.4 159.0 L480.4 157.5 L481.4 156.1 L482.4 154.7 L483.4 153.3 L484.4 151.9 L485.4 150.5 L486.4 149.2 L487.4 147.8 L488.4 146.5 L489.4 145.2 L490.4 143.8 L491.4 142.5 L492.4 141.2 L493.4 140.0 L494.4 138.7 L495.4 137.5 L496.4 136.2 L497.4 135.0 L498.4 133.8 L499.4 132.6 L500.4 131.4 L501.4 130.2 L502.4 129.1 L503.4 127.9 L504.4 126.8 L505.4 125.7 L506.4 124.6 L507.4 123.5 L508.4 122.5 L509.4 121.4 L510.4 120.4 L511.4 119.4 L512.4 118.4 L513.4 117.4 L514.4 116.5 L515.4 115.5 L516.4 114.6 L517.4 113.7 L518.4 112.8 L519.4 111.9 L520.4 111.1 L521.4 110.2 L522.4 109.4 L523.4 108.6 L524.4 107.8 L525.4 107.0 L526.4 106.3 L527.4 105.5 L528.4 104.8 L529.4 104.1 L530.4 103.4 L531.4 102.7 L532.4 102.1 L533.4 101.4 L534.4 100.8 L535.4 100.2 L536.4 99.6 L537.4 99.0 L538.4 98.4 L539.4 97.9 L540.4 97.3 L541.4 96.8 L542.4 96.3 L543.4 95.8 L544.4 95.3 L545.4 94.8 L546.4 94.3 L547.4 93.9 L548.4 93.4 L549.4 93.0 L550.4 92.6 L551.4 92.2 L552.4 91.8 L553.4 91.4 L554.4 91.1 L555.4 90.7 L556.4 90.4 L557.4 90.0 L558.4 89.7 L559.4 89.4 L560.4 89.1 L561.4 88.8 L562.4 88.6 L563.4 88.3 L564.4 88.0 L565.4 87.8 L566.4 87.6 L567.4 87.4 L568.4 87.1 L569.4 86.9 L570.4 86.7 L571.4 86.6 L572.4 86.4 L580.0 85.9 L588.5 85.8 L596.0 86.2 L603.0 87.1 L610.0 88.4 L617.0 89.3 L625.0 89.7 L638.0 89.8 L645.0 89.2 L652.0 88.6 L666.0 88.5" fill="none" stroke="#5a7aa8" stroke-width="1.15" stroke-linejoin="round"/>
<path d="M388.4 78.2 L389.4 79.5 L390.4 80.8 L391.4 82.3 L392.4 83.8 L393.4 85.4 L394.4 87.1 L395.4 88.9 L396.4 90.8 L397.4 92.7 L398.4 94.8 L399.4 96.9 L400.4 99.0 L401.4 101.3 L402.4 103.6 L403.4 105.9 L404.4 108.4 L405.4 110.8 L406.4 113.4 L407.4 115.9 L408.4 118.6 L409.4 121.2 L410.4 123.9 L411.4 126.7 L412.4 129.4 L413.4 132.2 L414.4 135.1 L415.4 137.9 L416.4 140.8 L417.4 143.7 L418.4 146.6 L419.4 149.5 L420.4 152.5 L421.4 155.4 L422.4 158.3 L423.4 161.3 L424.4 164.2 L425.4 167.1 L426.4 170.0 L427.4 173.0 L428.4 175.9 L429.4 178.7 L430.4 181.6 L431.4 184.4 L432.4 187.2 L433.4 190.0 L434.4 192.8 L435.4 195.5 L436.4 198.2 L437.4 200.8 L438.4 203.4 L439.4 206.0 L440.4 208.5 L441.4 210.9 L442.4 213.3 L443.4 215.6 L444.4 217.9 L445.4 220.1 L446.4 222.3 L447.4 224.4 L448.4 226.5 L449.4 228.5 L450.4 230.5 L451.4 232.4 L452.4 234.3 L453.4 236.1 L454.4 237.9 L455.4 239.7 L456.4 241.4 L457.4 243.1 L458.4 244.8 L459.4 246.5 L460.4 248.1 L461.4 249.7 L462.4 251.4 L463.4 252.9 L464.4 254.5 L465.4 256.1 L466.4 257.6 L467.4 259.2 L468.4 260.7 L469.4 262.3 L470.4 263.8 L471.4 265.3 L472.4 266.8 L473.4 268.3 L474.4 269.8 L475.4 271.2 L476.4 272.7 L477.4 274.2 L478.4 275.6 L479.4 277.0 L480.4 278.5 L481.4 279.9 L482.4 281.3 L483.4 282.7 L484.4 284.0 L485.4 285.4 L486.4 286.8 L487.4 288.1 L488.4 289.5 L489.4 290.8 L490.4 292.1 L491.4 293.4 L492.4 294.7 L493.4 296.0 L494.4 297.2 L495.4 298.5 L496.4 299.8 L497.4 301.0 L498.4 302.2 L499.4 303.4 L500.4 304.6 L501.4 305.8 L502.4 307.0 L503.4 308.1 L504.4 309.3 L505.4 310.4 L506.4 311.6 L507.4 312.7 L508.4 313.8 L509.4 314.9 L510.4 315.9 L511.4 317.0 L512.4 318.1 L513.4 319.1 L514.4 320.1 L515.4 321.1 L516.4 322.1 L517.4 323.1 L518.4 324.1 L519.4 325.0 L520.4 326.0 L521.4 326.9 L522.4 327.8 L523.4 328.7 L524.4 329.6 L525.4 330.5 L526.4 331.4 L527.4 332.2 L528.4 333.0 L529.4 333.8 L530.4 334.6 L531.4 335.4 L532.4 336.2 L533.4 337.0 L534.4 337.7 L535.4 338.4 L536.4 339.2 L537.4 339.9 L538.4 340.5 L539.4 341.2 L540.4 341.9 L541.4 342.5 L542.4 343.1 L543.4 343.7 L544.4 344.3 L545.4 344.9 L546.4 345.5 L547.4 346.0 L548.4 346.5 L549.4 347.1 L550.4 347.6 L551.4 348.0 L552.4 348.5 L553.4 349.0 L554.4 349.4 L555.4 349.8 L556.4 350.2 L557.4 350.6 L558.4 350.9 L559.4 351.3 L560.4 351.6 L561.4 351.9 L562.4 352.2 L563.4 352.5 L564.4 352.8 L565.4 353.0 L566.4 353.3 L567.4 353.5 L568.4 353.7 L569.4 353.8 L570.4 354.0 L571.4 354.1 L572.4 354.3 L573.4 354.4 L574.4 354.5 L575.4 354.5 L576.4 354.6 L577.4 354.6 L590.0 355.0 L603.0 353.9 L613.0 352.0 L621.0 351.2 L627.0 351.3 L633.0 352.2 L650.0 352.5 L653.0 353.0 L666.0 353.0" fill="none" stroke="#9058c4" stroke-width="1.05" stroke-linejoin="round"/>
<path d="M388.7 355.2 L389.7 355.1 L390.7 355.0 L391.7 355.0 L392.7 354.9 L393.7 354.8 L394.7 354.7 L395.7 354.6 L396.7 354.5 L397.7 354.5 L398.7 354.4 L399.7 354.3 L400.7 354.2 L401.7 354.1 L402.7 354.0 L403.7 353.9 L404.7 353.8 L405.7 353.8 L406.7 353.7 L407.7 353.6 L408.7 353.5 L409.7 353.4 L410.7 353.3 L411.7 353.2 L412.7 353.1 L413.7 353.0 L414.7 353.0 L415.7 352.9 L416.7 352.8 L417.7 352.7 L418.7 352.6 L419.7 352.5 L420.7 352.4 L421.7 352.3 L422.7 352.2 L423.7 352.1 L424.7 352.0 L425.7 352.0 L426.7 351.9 L427.7 351.8 L428.7 351.7 L429.7 351.6 L430.7 351.5 L431.7 351.4 L432.7 351.3 L433.7 351.2 L434.7 351.1 L435.7 351.0 L436.7 350.9 L437.7 350.8 L438.7 350.7 L439.7 350.6 L440.7 350.6 L441.7 350.5 L442.7 350.4 L443.7 350.3 L444.7 350.2 L445.7 350.1 L446.7 350.0 L447.7 349.9 L448.7 349.8 L449.7 349.7 L450.7 349.6 L451.7 349.5 L452.7 349.4 L453.7 349.3 L454.7 349.3 L455.7 349.2 L456.7 349.1 L457.7 349.0 L458.7 348.9 L459.7 348.8 L460.7 348.7 L461.7 348.6 L462.7 348.5 L463.7 348.4 L464.7 348.3 L465.7 348.2 L466.7 348.2 L467.7 348.1 L468.7 348.0 L469.7 347.9 L470.7 347.8 L471.7 347.7 L472.7 347.6 L473.7 347.5 L474.7 347.4 L475.7 347.3 L476.7 347.3 L477.7 347.2 L478.7 347.1 L479.7 347.0 L480.7 346.9 L481.7 346.8 L482.7 346.7 L483.7 346.6 L484.7 346.6 L485.7 346.5 L486.7 346.4 L487.7 346.3 L488.7 346.2 L489.7 346.1 L490.7 346.0 L491.7 346.0 L492.7 345.9 L493.7 345.8 L494.7 345.7 L495.7 345.6 L496.7 345.6 L497.7 345.5 L498.7 345.4 L499.7 345.3 L500.7 345.2 L501.7 345.2 L502.7 345.1 L503.7 345.0 L504.7 344.9 L505.7 344.8 L506.7 344.8 L507.7 344.7 L508.7 344.6 L509.7 344.5 L510.7 344.5 L511.7 344.4 L512.7 344.3 L513.7 344.3 L514.7 344.2 L515.7 344.1 L516.7 344.0 L517.7 344.0 L518.7 343.9 L519.7 343.8 L520.7 343.8 L521.7 343.7 L522.7 343.6 L523.7 343.6 L524.7 343.5 L525.7 343.4 L526.7 343.4 L527.7 343.3 L528.7 343.2 L529.7 343.2 L530.7 343.1 L531.7 343.1 L532.7 343.0 L533.7 342.9 L534.7 342.9 L535.7 342.8 L536.7 342.8 L537.7 342.7 L538.7 342.7 L539.7 342.6 L540.7 342.5 L541.7 342.5 L542.7 342.4 L543.7 342.4 L544.7 342.3 L545.7 342.3 L546.7 342.2 L547.7 342.2 L548.7 342.1 L549.7 342.1 L550.7 342.1 L551.7 342.0 L552.7 342.0 L553.7 341.9 L554.7 341.9 L555.7 341.8 L556.7 341.8 L557.7 341.8 L558.7 341.7 L559.7 341.7 L560.7 341.7 L561.7 341.6 L562.7 341.6 L563.7 341.6 L564.7 341.5 L565.7 341.5 L566.7 341.5 L567.7 341.4 L568.7 341.4 L569.7 341.4 L570.7 341.4 L571.7 341.3 L572.7 341.3 L573.7 341.3 L574.7 341.3 L575.7 341.2 L576.7 341.2 L577.7 341.2 L578.7 341.2 L579.7 341.2 L580.7 341.2 L581.7 341.1 L582.7 341.1 L583.7 341.1 L584.7 341.1 L585.7 341.1 L586.7 341.1 L587.7 341.1 L588.7 341.1 L589.7 341.1 L590.7 341.1 L591.7 341.1 L592.7 341.1 L593.7 341.1 L594.7 341.1 L595.7 341.1 L596.7 341.1 L597.7 341.1 L602.0 341.9 L666.0 342.0" fill="none" stroke="#e83a3a" stroke-width="1.1" stroke-linejoin="round"/>
<text x="354.9" y="73.9" font-size="9.5" fill="#606060" text-anchor="start" textLength="31.1" lengthAdjust="spacingAndGlyphs" >[x1.E3]</text>
<text x="373.4" y="82.8" font-size="9" fill="#606060" text-anchor="start" textLength="12.1" lengthAdjust="spacingAndGlyphs" >1.5</text>
<text x="373.0" y="175.5" font-size="9" fill="#606060" text-anchor="start" textLength="12.1" lengthAdjust="spacingAndGlyphs" >1.0</text>
<text x="373.0" y="266.5" font-size="9" fill="#606060" text-anchor="start" textLength="12.1" lengthAdjust="spacingAndGlyphs" >0.5</text>
<text x="372.4" y="356.2" font-size="9" fill="#606060" text-anchor="start" textLength="14.1" lengthAdjust="spacingAndGlyphs" >0.0</text>
<text x="378.0" y="364.4" font-size="9" fill="#606060" text-anchor="start" textLength="19.2" lengthAdjust="spacingAndGlyphs" >0.00</text>
<text x="433.3" y="364.4" font-size="9" fill="#606060" text-anchor="start" textLength="19.2" lengthAdjust="spacingAndGlyphs" >0.10</text>
<text x="488.6" y="364.4" font-size="9" fill="#606060" text-anchor="start" textLength="19.2" lengthAdjust="spacingAndGlyphs" >0.20</text>
<text x="544.9" y="364.4" font-size="9" fill="#606060" text-anchor="start" textLength="19.2" lengthAdjust="spacingAndGlyphs" >0.30</text>
<text x="600.7" y="364.4" font-size="9" fill="#606060" text-anchor="start" textLength="19.2" lengthAdjust="spacingAndGlyphs" >0.40</text>
<text x="656.3" y="364.4" font-size="9" fill="#606060" text-anchor="start" textLength="18.2" lengthAdjust="spacingAndGlyphs" >0.50</text>
<text x="676.6" y="364.4" font-size="9.5" fill="#606060" text-anchor="start" textLength="34.9" lengthAdjust="spacingAndGlyphs" >[x1.E-3]</text>
<text x="517.3" y="376.7" font-size="9" fill="#404040" text-anchor="start" textLength="19.4" lengthAdjust="spacingAndGlyphs" >Time</text>
<text x="0" y="0" font-size="9" fill="#404040" text-anchor="middle" textLength="29.7" lengthAdjust="spacingAndGlyphs" transform="translate(363.2 216.7) rotate(-90)">Energy</text>
<rect x="591.5" y="379.5" width="123" height="38.3" fill="#ffffff" stroke="#585858" stroke-width="1"/>
<path d="M595.7 387.4 L614.9 387.4" stroke="#e83a3a" stroke-width="1.1"/>
<path d="M595.7 398.7 L614.9 398.7" stroke="#5a7aa8" stroke-width="1.1"/>
<path d="M595.7 410.5 L614.9 410.5" stroke="#9a60d8" stroke-width="1.1"/>
<text x="624.4" y="390.8" font-size="9" fill="#404040" text-anchor="start" textLength="85" lengthAdjust="spacingAndGlyphs" >ALLAE Whole Model</text>
<text x="624.4" y="402.2" font-size="9" fill="#404040" text-anchor="start" textLength="83.3" lengthAdjust="spacingAndGlyphs" >ALLIE Whole Model</text>
<text x="624.4" y="413.8" font-size="9" fill="#404040" text-anchor="start" textLength="85" lengthAdjust="spacingAndGlyphs" >ALLKE Whole Model</text>
<rect x="0" y="428.3" width="720" height="15.7" fill="url(#botbg)"/>
<rect x="0" y="426.9" width="346" height="1.5" fill="#858585"/>
<rect x="0" y="422.8" width="344" height="4.1" fill="#cad8e6"/>
<rect x="343.9" y="39.6" width="2.2" height="388.8" fill="#8f98a5"/>
</svg>
</body></html>
